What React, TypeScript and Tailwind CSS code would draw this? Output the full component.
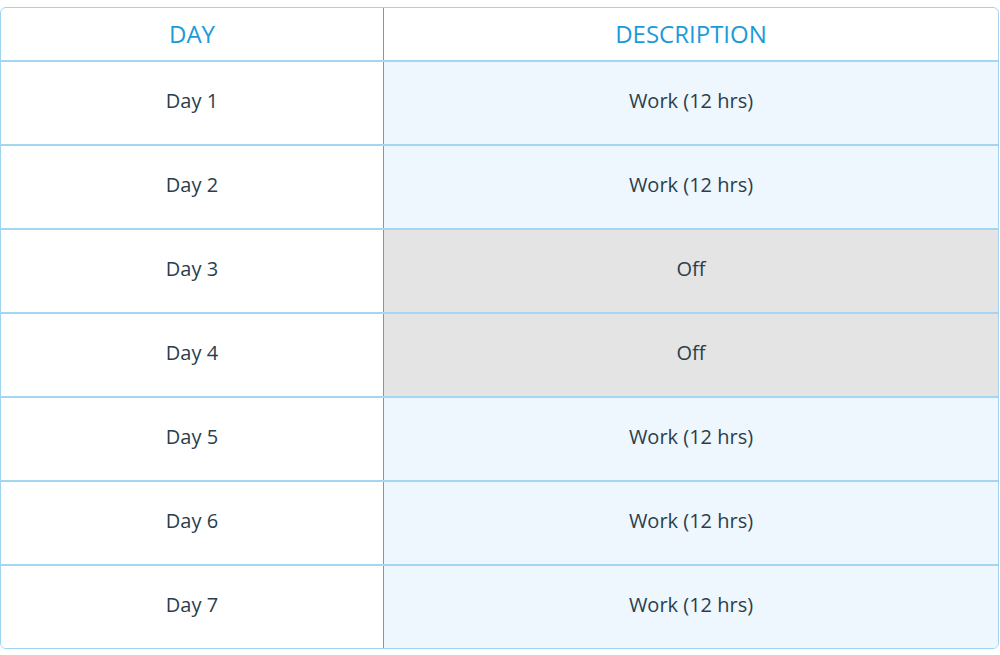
const ROWS = [
  { day: 'Day 1', desc: 'Work (12 hrs)', off: false },
  { day: 'Day 2', desc: 'Work (12 hrs)', off: false },
  { day: 'Day 3', desc: 'Off', off: true },
  { day: 'Day 4', desc: 'Off', off: true },
  { day: 'Day 5', desc: 'Work (12 hrs)', off: false },
  { day: 'Day 6', desc: 'Work (12 hrs)', off: false },
  { day: 'Day 7', desc: 'Work (12 hrs)', off: false },
];

export default function App() {
  return (
    <div className="w-[1000px] h-[655px] bg-white pt-[7px] font-['Open_Sans',sans-serif]">
      <div className="w-[999px] border border-[#9fd4f1] rounded-[6px] overflow-hidden">
        {/* header */}
        <div className="flex h-[54px] border-b-2 border-[#a5d6f1]">
          <div className="w-[383px] flex items-center justify-center text-[24px] text-[#1b9bd8] border-r border-[#49a9e3]">
            DAY
          </div>
          <div className="flex-1 flex items-center justify-center text-[24px] text-[#1b9bd8]">
            DESCRIPTION
          </div>
        </div>

        {/* rows */}
        {ROWS.map((row, i) => (
          <div
            key={row.day}
            className={i === ROWS.length - 1 ? 'flex h-[82px]' : 'flex h-[84px] border-b-2 border-[#a5d6f1]'}
          >
            <div className="w-[383px] flex items-center justify-center pb-[4px] text-[20px] text-[#2a3e4e] bg-white border-r border-[#49a9e3]">
              {row.day}
            </div>
            <div
              className={`flex-1 flex items-center justify-center pb-[4px] text-[20px] text-[#2a3e4e] ${
                row.off ? 'bg-[#e4e4e4]' : 'bg-[#eef7fd]'
              }`}
            >
              {row.desc}
            </div>
          </div>
        ))}
      </div>
    </div>
  );
}
